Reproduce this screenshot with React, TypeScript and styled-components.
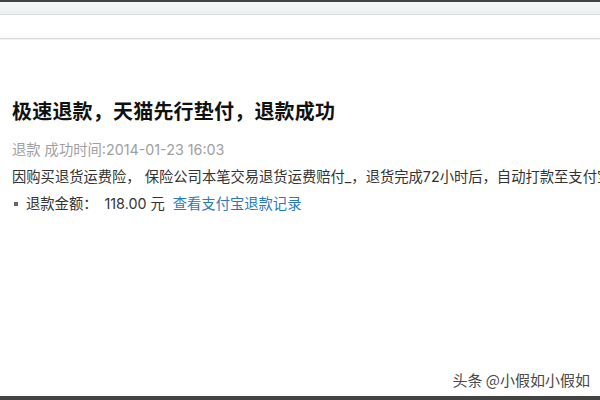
import { createGlobalStyle } from 'styled-components'
import styled from 'styled-components'

const GlobalStyle = createGlobalStyle`
	html, body {
		margin: 0;
		padding: 0;
		background: #ffffff;
	}
	body {
		font-family: 'Liberation Sans', 'Noto Sans CJK SC', sans-serif;
	}
`

const Page = styled.div`
	width: 600px;
	height: 400px;
	display: flex;
	flex-direction: column;
	overflow: hidden;
	background: #ffffff;
`

const TopEdge = styled.div`
	height: 2px;
	background: #434343;
`

const Band = styled.div`
	height: 12px;
	background: linear-gradient(#f4f6f6, #eef1f1);
	border-bottom: 1px solid #dcdedd;
`

const SubBand = styled.div`
	height: 23px;
	background: #ffffff;
	border-bottom: 1px solid #dcdcdc;
	box-shadow: 0 1px 0 #f0f0f0, inset 0 -5px 0 #fcfcfc;
`

const Content = styled.div`
	flex: 1;
	padding: 58px 0 0 12px;
	white-space: nowrap;
`

const Title = styled.h1`
	margin: 0 0 11px;
	font-family: 'Noto Sans CJK SC', sans-serif;
	font-weight: 700;
	font-size: 20px;
	line-height: 28px;
	color: #111111;
	letter-spacing: 0.2px;
`

const Line = styled.div<{ $muted?: boolean }>`
	font-size: 14.3px;
	line-height: 27px;
	color: ${(p) => (p.$muted ? '#a0a0a0' : '#333333')};
	font-family: 'Inter', 'Noto Sans CJK SC', sans-serif;
`

const Bullet = styled.span`
	display: inline-block;
	width: 4px;
	height: 4px;
	background: #666666;
	margin: 0 8px 3px 2px;
	vertical-align: middle;
`

const Amount = styled.span`
	margin-left: 7px;
`

const RecordLink = styled.a`
	color: #2b7bbb;
	text-decoration: none;
	margin-left: 8px;
`

const Footer = styled.div`
	display: flex;
	justify-content: flex-end;
	padding: 0 10px 6px 0;
`

const Watermark = styled.span`
	font-family: 'Noto Sans CJK SC', sans-serif;
	font-size: 15px;
	color: #4a4a4a;
	text-shadow: 1px 1px 0 #ffffff, -1px -1px 0 #ffffff;
`

const BottomEdge = styled.div`
	height: 4px;
	background: #434343;
`

export default function App() {
	return (
		<Page>
			<GlobalStyle />
			<TopEdge />
			<Band />
			<SubBand />
			<Content>
				<Title>极速退款，天猫先行垫付，退款成功</Title>
				<Line $muted>退款 成功时间:2014-01-23 16:03</Line>
				<Line>因购买退货运费险， 保险公司本笔交易退货运费赔付_，退货完成72小时后，自动打款至支付宝</Line>
				<Line>
					<Bullet />
					退款金额：<Amount>118.00 元</Amount>
					<RecordLink href="#">查看支付宝退款记录</RecordLink>
				</Line>
			</Content>
			<Footer>
				<Watermark>头条 @小假如小假如</Watermark>
			</Footer>
			<BottomEdge />
		</Page>
	)
}
